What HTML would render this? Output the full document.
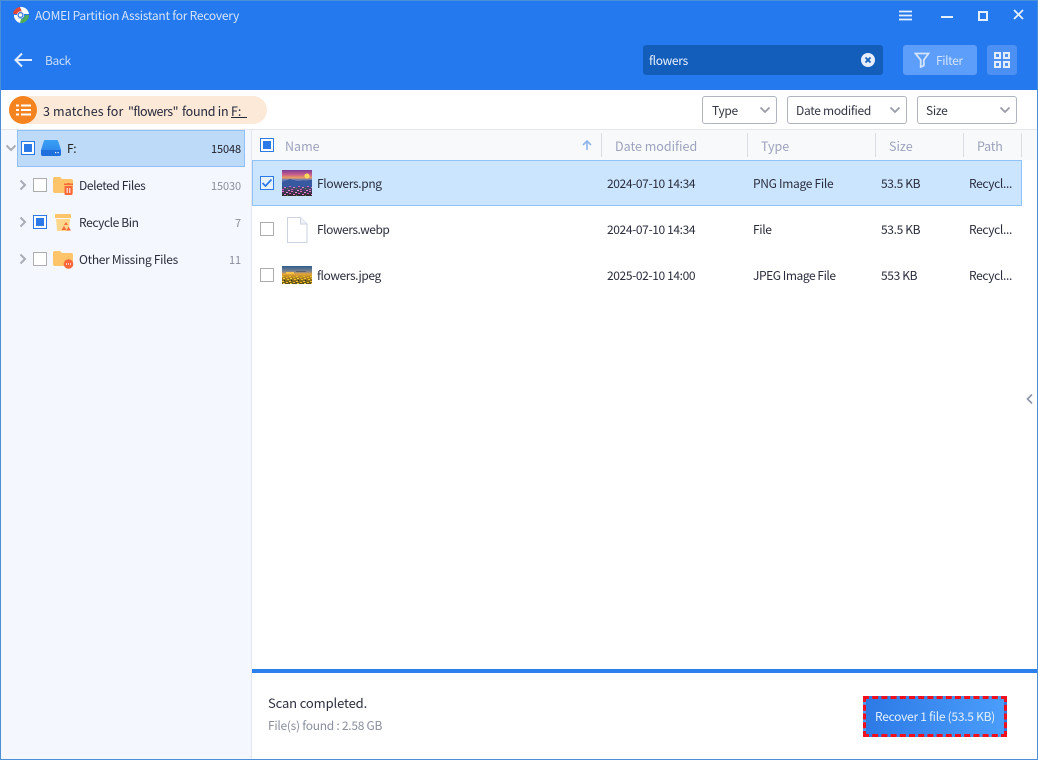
<!DOCTYPE html>
<html><head><meta charset="utf-8"><style>
html,body{margin:0;padding:0;width:1038px;height:760px;overflow:hidden;background:#fff}
body{position:relative;font-family:"Noto Sans CJK SC","Liberation Sans",sans-serif;font-size:12px;color:#2a2d3c}
.a{position:absolute;white-space:nowrap}
.t{position:absolute;white-space:nowrap;line-height:18px;height:18px;letter-spacing:-.35px}
.cb{position:absolute;width:12px;height:12px;border:1px solid #adadad;background:#fff}
.cb.on{border-color:#2b7ae8;width:12px;height:12px}
.cb.on:after{content:"";position:absolute;left:2px;top:2px;width:8px;height:8px;background:#2b7ae8}
.sel{position:absolute;top:96px;height:26px;border:1px solid #b0b3c0;border-radius:3px;background:#fff;line-height:28px;font-size:12px;color:#333645;box-sizing:content-box;letter-spacing:-.3px}
.sep{position:absolute;top:133px;width:1px;height:24px;background:#dcdde2}
.h{position:absolute;top:137px;line-height:18px;font-size:12.5px;color:#9da2bd}
.g{color:#8d8d9c}
.n{letter-spacing:-.1px;font-size:11px}
</style></head><body>
<div class="a" style="left:0;top:0;width:1038px;height:90px;background:#2479ee"></div>
<div class="a" style="left:0;top:0;width:1038px;height:1px;background:#4a8fd8"></div>
<svg class="a" style="left:11px;top:5px" width="20" height="20" viewBox="0 0 20 20"><path d="M2 9A8 8 0 0 1 9 2L11 7A3 3 0 0 0 7 9Z" fill="#e0483a"/><path d="M9 2A8 8 0 0 1 18 9L13 9A3 3 0 0 0 11 7Z" fill="#fff"/><path d="M18 10A8 8 0 0 1 9 18L10 14A4 4 0 0 0 14 10Z" fill="#4fae5c"/><path d="M3 10A8 8 0 0 0 9 18L10 14A4 4 0 0 1 6 10Z" fill="#fff"/><circle cx="9.5" cy="10" r="3.6" fill="#fff"/><circle cx="9.5" cy="10" r="2.4" fill="none" stroke="#2c72d8" stroke-width="1.2"/></svg>
<div class="t" style="left:35px;top:7px;font-size:12px;letter-spacing:-.24px;color:#d5e5fb">AOMEI Partition Assistant for Recovery</div>
<svg class="a" style="left:899px;top:10px" width="14" height="12"><path d="M0 1.5H13M0 5.5H13M0 9.5H13" stroke="#e6effc" stroke-width="1.7"/></svg>
<div class="a" style="left:941px;top:16px;width:12px;height:2px;background:#e6effc"></div>
<div class="a" style="left:978px;top:11px;width:6px;height:6px;border:2px solid #e6effc"></div>
<svg class="a" style="left:1013px;top:9px" width="12" height="12"><path d="M1 1L10 10M10 1L1 10" stroke="#e6effc" stroke-width="1.8"/></svg>
<svg class="a" style="left:14px;top:52px" width="19" height="16"><path d="M1.5 8H18M8 1.5L1.5 8L8 14.5" fill="none" stroke="#e3edfb" stroke-width="2"/></svg>
<div class="t" style="left:45px;top:52px;color:#c9defa;font-size:12px;letter-spacing:-.4px">Back</div>
<div class="a" style="left:643px;top:45px;width:240px;height:30px;background:#135dbb;border-radius:3px"></div>
<div class="t" style="left:649px;top:52px;color:#eaf2fd;font-size:12px;letter-spacing:-.3px">flowers</div>
<svg class="a" style="left:861px;top:53px" width="14" height="14"><circle cx="7" cy="7" r="7" fill="#e6eefa"/><path d="M4.5 4.5L9.5 9.5M9.5 4.5L4.5 9.5" stroke="#135dbb" stroke-width="1.8"/></svg>
<div class="a" style="left:903px;top:45px;width:74px;height:30px;background:#5c9efa;border-radius:3px"></div>
<svg class="a" style="left:914px;top:52px" width="16" height="16"><path d="M1.5 1.5H14.5L9.8 8V13.5L6.7 15V8Z" fill="none" stroke="#d3e4fc" stroke-width="1.8"/></svg>
<div class="t" style="left:936px;top:52px;color:#d3e4fc;font-size:12px;letter-spacing:-.4px">Filter</div>
<div class="a" style="left:987px;top:45px;width:30px;height:30px;background:#4b90f2;border-radius:3px"></div>
<svg class="a" style="left:994px;top:52px" width="16" height="16"><g fill="none" stroke="#e3edfb" stroke-width="2"><rect x="1" y="1" width="5" height="5"/><rect x="10" y="1" width="5" height="5"/><rect x="1" y="10" width="5" height="5"/><rect x="10" y="10" width="5" height="5"/></g></svg>

<div class="a" style="left:9px;top:96px;width:258px;height:28px;background:#fce9d8;border-radius:14px"></div>
<div class="a" style="left:9px;top:96px;width:28px;height:28px;background:#f5831f;border-radius:14px"></div>
<svg class="a" style="left:16px;top:104px" width="15" height="12"><path d="M0 1.5H3M5 1.5H15M0 6H3M5 6H15M0 10.5H3M5 10.5H15" stroke="#fff" stroke-width="2"/></svg>
<div class="t" style="left:43px;top:102px;font-size:12.5px;letter-spacing:.15px;color:#26283a">3 matches for</div>
<div class="t" style="left:128px;top:102px;font-size:12.5px;letter-spacing:-.5px;color:#26283a">"flowers"</div>
<div class="t" style="left:182px;top:102px;font-size:12.5px;letter-spacing:-.25px;color:#26283a">found in</div>
<div class="t" style="left:231px;top:102px;font-size:12.5px;letter-spacing:0;color:#26283a"><span style="text-decoration:underline">F:&nbsp;&nbsp;</span></div>

<div class="sel" style="left:702px;width:73px"><span style="margin-left:9px">Type</span></div>
<div class="sel" style="left:787px;width:118px"><span style="margin-left:8px">Date modified</span></div>
<div class="sel" style="left:917px;width:98px"><span style="margin-left:8px">Size</span></div>
<svg class="a" style="left:759px;top:106px" width="12" height="8"><path d="M1.5 1.5L6 6L10.5 1.5" fill="none" stroke="#9a9ca8" stroke-width="1.8"/></svg>
<svg class="a" style="left:889px;top:106px" width="12" height="8"><path d="M1.5 1.5L6 6L10.5 1.5" fill="none" stroke="#9a9ca8" stroke-width="1.8"/></svg>
<svg class="a" style="left:999px;top:106px" width="12" height="8"><path d="M1.5 1.5L6 6L10.5 1.5" fill="none" stroke="#9a9ca8" stroke-width="1.8"/></svg>

<div class="a" style="left:0;top:129px;width:1038px;height:1px;background:#e4e6ea"></div>
<div class="a" style="left:1px;top:130px;width:250px;height:629px;background:#f4f7fd"></div>
<div class="a" style="left:251px;top:130px;width:1px;height:629px;background:#e4e6f0"></div>
<div class="a" style="left:252px;top:130px;width:785px;height:30px;background:#f8f9fb"></div>

<div class="a" style="left:17px;top:130px;width:228px;height:37px;box-sizing:border-box;background:#bddaf8;border:1px solid #8fc0f8"></div>
<svg class="a" style="left:5px;top:144px" width="12" height="9"><path d="M1.5 1.5L6 6L10.5 1.5" fill="none" stroke="#a9abb6" stroke-width="2"/></svg>
<div class="cb on" style="left:21px;top:141px"></div>
<svg class="a" style="left:41px;top:139px" width="20" height="18"><defs><linearGradient id="d" x1="0" y1="0" x2="0" y2="1"><stop offset="0" stop-color="#3aa0f5"/><stop offset="1" stop-color="#2a80ea"/></linearGradient></defs><path d="M4 1H16Q17 1 17.5 3L20 11V15Q20 17 18 17H2Q0 17 0 15V11L2.5 3Q3 1 4 1Z" fill="url(#d)"/><path d="M0 11H20V15Q20 17 18 17H2Q0 17 0 15Z" fill="#1f6fdc"/><rect x="14" y="13" width="1.2" height="1.2" fill="#fff"/><rect x="16.5" y="13" width="1.2" height="1.2" fill="#fff"/></svg>
<div class="t" style="left:67px;top:140px;color:#222">F:</div>
<div class="t n" style="left:191px;top:141px;width:50px;text-align:right;color:#1c1c28;line-height:16px">15048</div>

<svg class="a" style="left:19px;top:179px" width="8" height="12"><path d="M1.5 1.5L6 6L1.5 10.5" fill="none" stroke="#a9abb6" stroke-width="2"/></svg>
<div class="cb" style="left:33px;top:178px"></div>
<svg class="a" style="left:53px;top:176px" width="21" height="20"><path d="M0 3Q0 1 2 1H7L9 3H18Q20 3 20 5V17H2Q0 17 0 15Z" fill="#fdc469"/><path d="M11 9H20V7.5H17L16.5 7H14.5L14 7.5H11Z" fill="#f8683b"/><path d="M11.5 10H19.5V18Q19.5 19 18.5 19H12.5Q11.5 19 11.5 18Z" fill="#f8683b"/><path d="M14.2 12V17M16.8 12V17" stroke="#fff" stroke-width="1"/></svg>
<div class="t" style="left:79px;top:177px;letter-spacing:-.4px">Deleted Files</div>
<div class="t g n" style="left:191px;top:178px;width:50px;text-align:right;line-height:16px">15030</div>

<svg class="a" style="left:19px;top:216px" width="8" height="12"><path d="M1.5 1.5L6 6L1.5 10.5" fill="none" stroke="#a9abb6" stroke-width="2"/></svg>
<div class="cb on" style="left:33px;top:215px"></div>
<svg class="a" style="left:55px;top:214px" width="17" height="18"><path d="M1 0H15Q16 0 16 1V4H0V1Q0 0 1 0Z" fill="#fdc469"/><path d="M1 5H15L14 17H3Q2 17 2 16Z" fill="#fed68c"/><path d="M11 8L13 11H9Z" fill="#f8683b"/><path d="M9 12L11.5 16H6.5Z" fill="#f8683b"/><path d="M13.5 12.5L16 16.5H11.5Z" fill="#f8683b"/></svg>
<div class="t" style="left:79px;top:214px;letter-spacing:-.4px">Recycle Bin</div>
<div class="t g n" style="left:191px;top:215px;width:50px;text-align:right;line-height:16px">7</div>

<svg class="a" style="left:19px;top:253px" width="8" height="12"><path d="M1.5 1.5L6 6L1.5 10.5" fill="none" stroke="#a9abb6" stroke-width="2"/></svg>
<div class="cb" style="left:33px;top:252px"></div>
<svg class="a" style="left:53px;top:250px" width="21" height="20"><path d="M0 3Q0 1 2 1H7L9 3H18Q20 3 20 5V16H2Q0 16 0 14Z" fill="#fdc469"/><circle cx="15.5" cy="14" r="4.8" fill="#f8683b"/><path d="M13 14H14M15 14H16M17 14H18" stroke="#fff" stroke-width="1.2"/></svg>
<div class="t" style="left:79px;top:251px;letter-spacing:-.3px">Other Missing Files</div>
<div class="t g n" style="left:191px;top:252px;width:50px;text-align:right;line-height:16px">11</div>

<div class="cb on" style="left:260px;top:138px"></div>
<div class="h" style="left:285px">Name</div>
<svg class="a" style="left:582px;top:140px" width="10" height="11"><path d="M5 10V1.5M1 5L5 1L9 5" fill="none" stroke="#8fb4ec" stroke-width="1.6"/></svg>
<div class="sep" style="left:601px"></div><div class="sep" style="left:747px"></div><div class="sep" style="left:875px"></div><div class="sep" style="left:963px"></div><div class="sep" style="left:1021px"></div>
<div class="h" style="left:615px">Date modified</div>
<div class="h" style="left:761px">Type</div>
<div class="h" style="left:889px">Size</div>
<div class="h" style="left:977px;letter-spacing:-.2px">Path</div>

<div class="a" style="left:252px;top:160px;width:770px;height:46px;box-sizing:border-box;background:#cbe5fe;border:1px solid #91c3f9"></div>
<div class="cb" style="left:260px;top:176px;border-color:#2b7ae8;background:#e8f2fd"></div>
<svg class="a" style="left:261px;top:178px" width="12" height="10"><path d="M1.5 5L4.5 8L10.5 1.5" fill="none" stroke="#2b7ae8" stroke-width="1.8"/></svg>
<svg class="a" style="left:282px;top:170px" width="30" height="26" shape-rendering="crispEdges"><defs><linearGradient id="s" x1="0" y1="0" x2="0" y2="1"><stop offset="0" stop-color="#7b3c96"/><stop offset=".18" stop-color="#c9608a"/><stop offset=".3" stop-color="#e8a060"/><stop offset=".38" stop-color="#6a78b8"/><stop offset=".62" stop-color="#2c4d93"/><stop offset=".7" stop-color="#4a4a72"/><stop offset="1" stop-color="#30262e"/></linearGradient><pattern id="fp" width="9" height="7" patternUnits="userSpaceOnUse"><rect x="0" y="0" width="2" height="1" fill="#e868c8"/><rect x="4" y="1" width="2" height="1" fill="#f28ad8"/><rect x="7" y="2" width="2" height="1" fill="#d957b8"/><rect x="2" y="3" width="2" height="1" fill="#ee7ccf"/><rect x="5" y="4" width="1" height="1" fill="#6a8a4a"/><rect x="0" y="5" width="2" height="1" fill="#d957b8"/><rect x="6" y="6" width="2" height="1" fill="#f28ad8"/></pattern></defs><rect width="30" height="26" fill="url(#s)"/><circle cx="25" cy="6" r="2.6" fill="#fbd85c"/><path d="M0 12L8 9L15 11L30 10V17H0Z" fill="#36599f"/><rect y="16" width="30" height="10" fill="url(#fp)"/></svg>
<div class="t" style="left:317px;top:175px">Flowers.png</div>
<div class="t" style="left:607px;top:175px;letter-spacing:-.38px">2024-07-10 14:34</div>
<div class="t" style="left:753px;top:175px;letter-spacing:-.3px">PNG Image File</div>
<div class="t" style="left:881px;top:175px">53.5 KB</div>
<div class="t" style="left:969px;top:175px">Recycl...</div>

<div class="cb" style="left:260px;top:222px"></div>
<svg class="a" style="left:287px;top:217px" width="21" height="26"><path d="M.5.5H13.5L20 7V25.5H.5Z" fill="#fff" stroke="#ccd2e0"/><path d="M13.5.5V7H20" fill="#f0f2f7" stroke="#ccd2e0"/></svg>
<div class="t" style="left:317px;top:221px;letter-spacing:-.45px">Flowers.webp</div>
<div class="t" style="left:607px;top:221px;letter-spacing:-.38px">2024-07-10 14:34</div>
<div class="t" style="left:753px;top:221px">File</div>
<div class="t" style="left:881px;top:221px">53.5 KB</div>
<div class="t" style="left:969px;top:221px">Recycl...</div>

<div class="cb" style="left:260px;top:268px"></div>
<svg class="a" style="left:282px;top:266px" width="30" height="18" shape-rendering="crispEdges"><defs><linearGradient id="j" x1="0" y1="0" x2="0" y2="1"><stop offset="0" stop-color="#2f5d8c"/><stop offset=".3" stop-color="#7d8590"/><stop offset=".45" stop-color="#e8a53a"/><stop offset=".6" stop-color="#b98a20"/><stop offset="1" stop-color="#5a4f18"/></linearGradient><pattern id="jp" width="7" height="5" patternUnits="userSpaceOnUse"><rect x="0" y="0" width="2" height="1" fill="#f0c030"/><rect x="4" y="1" width="2" height="1" fill="#e8b020"/><rect x="1" y="2" width="2" height="1" fill="#f4cc40"/><rect x="5" y="3" width="2" height="1" fill="#f0c030"/><rect x="2" y="4" width="1" height="1" fill="#2a2a10"/></pattern></defs><rect width="30" height="18" fill="url(#j)"/><rect x="4" y="6" width="8" height="2" fill="#f6c24a"/><rect x="14" y="5" width="10" height="1" fill="#5b5f70"/><rect y="10" width="30" height="8" fill="url(#jp)"/></svg>
<div class="t" style="left:317px;top:267px;letter-spacing:-.4px">flowers.jpeg</div>
<div class="t" style="left:607px;top:267px;letter-spacing:-.38px">2025-02-10 14:00</div>
<div class="t" style="left:753px;top:267px;letter-spacing:-.45px">JPEG Image File</div>
<div class="t" style="left:881px;top:267px">553 KB</div>
<div class="t" style="left:969px;top:267px">Recycl...</div>

<svg class="a" style="left:1026px;top:393px" width="8" height="12"><path d="M6 1.5L1.5 6L6 10.5" fill="none" stroke="#8d93a8" stroke-width="1.6"/></svg>

<div class="a" style="left:252px;top:669px;width:785px;height:4px;background:#2b80ee"></div>
<div class="t" style="left:268px;top:694px;font-size:13px;letter-spacing:-.13px;color:#2c2f3e">Scan completed.</div>
<div class="t" style="left:268px;top:717px;font-size:12px;letter-spacing:-.27px;color:#8b8f9f">File(s) found : 2.58 GB</div>
<div class="a" style="left:863px;top:696px;width:144px;height:41px;box-sizing:border-box;background:linear-gradient(90deg,#2d7ae6,#4a9dfb);border:3px dashed #f10f1d;color:#e3effd;text-align:center;line-height:35px;font-size:12px;letter-spacing:-.27px">Recover 1 file (53.5 KB)</div>

<div class="a" style="left:0;top:0;width:1px;height:760px;background:#4a8fd8"></div>
<div class="a" style="left:1037px;top:0;width:1px;height:760px;background:#4a8fd8"></div>
<div class="a" style="left:0;top:759px;width:1038px;height:1px;background:#4a8fd8"></div>
</body></html>
